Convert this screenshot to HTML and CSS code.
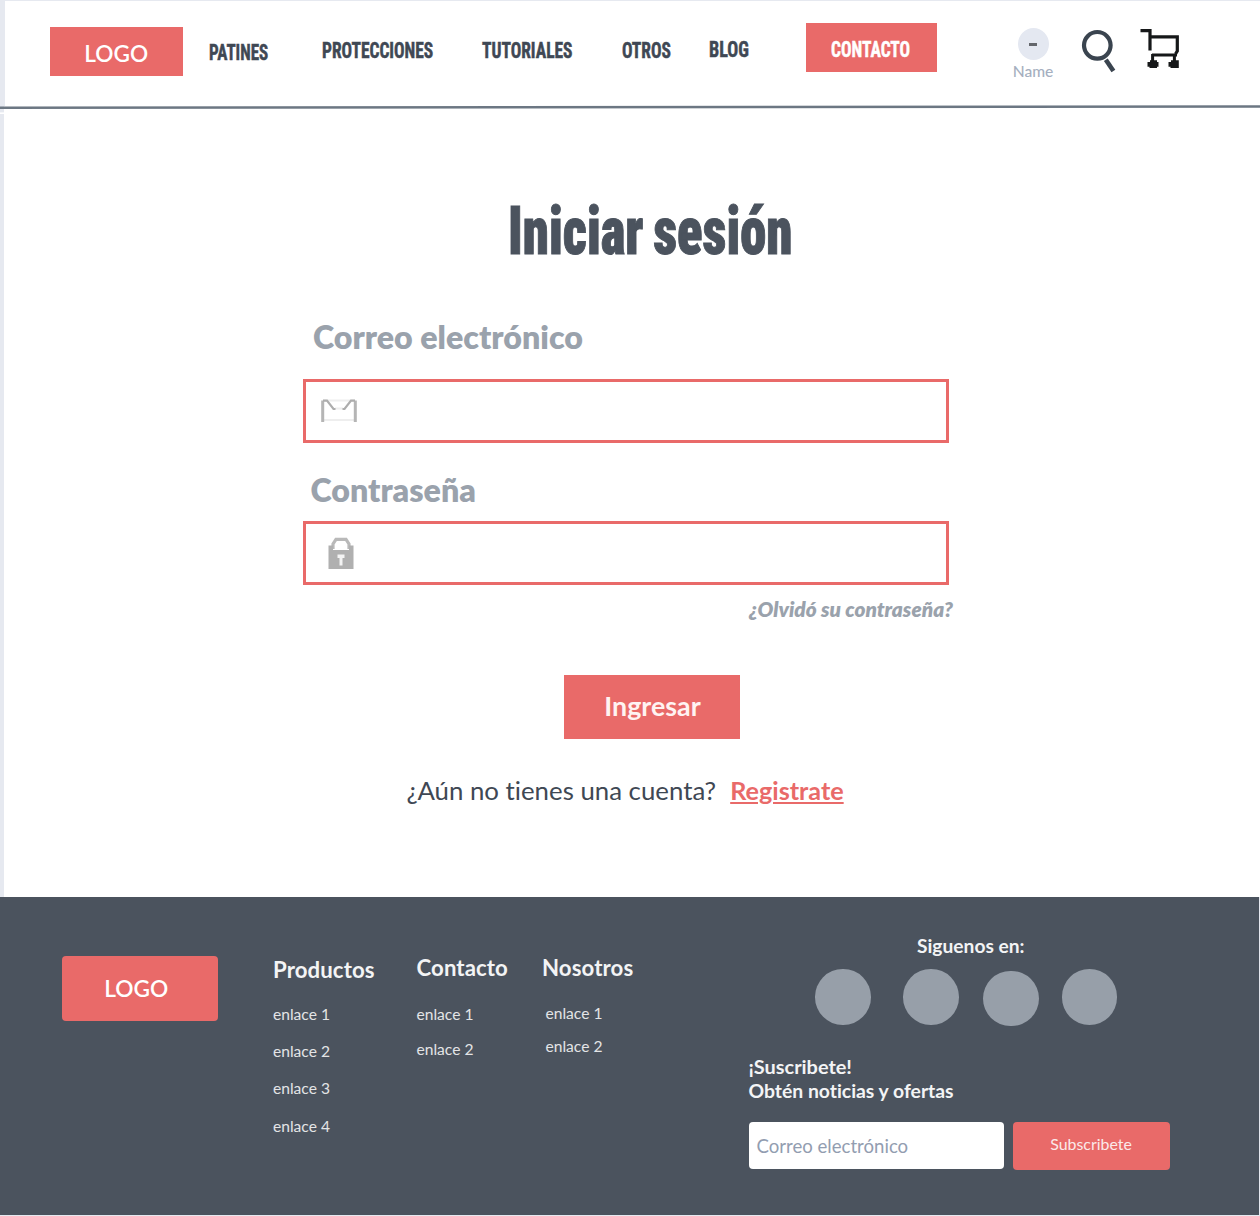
FILE: index.html
```html
<!DOCTYPE html>
<html lang="es">
<head>
<meta charset="utf-8">
<title>Iniciar sesión</title>
<link rel="stylesheet" href="styles.css">
</head>
<body>
<div class="page">
  <header class="header">
    <a class="logo">LOGO</a>
    <a class="nav-link patines"><span>PATINES</span></a>
    <a class="nav-link"><span>PROTECCIONES</span></a>
    <a class="nav-link"><span>TUTORIALES</span></a>
    <a class="nav-link"><span>OTROS</span></a>
    <a class="nav-link blog"><span>BLOG</span></a>
    <a class="nav-link contact"><span>CONTACTO</span></a>
    <div class="user">
      <div class="avatar"><i></i></div>
      <div class="user-name">Name</div>
    </div>
    <svg class="search" width="40" height="46" viewBox="0 0 40 46" fill="none" stroke="#3a444f">
      <circle cx="17.3" cy="16.3" r="13.3" stroke-width="4.2"/>
      <path d="M25.8 30.8L33.4 42" stroke-width="4.6"/>
    </svg>
    <svg class="cart" width="42" height="42" viewBox="0 0 42 42" fill="none" stroke="#161819">
      <path d="M.5 2.7H10V22.5" stroke-width="3.2"/>
      <path d="M9 8.8H37.3V23L35.5 26" stroke-width="3.2"/>
      <path d="M12 27H37M12.6 26V34M34.4 26V34" stroke-width="3"/>
      <path d="M10 32.3H17V34H18.5V38.8H17V40H9.5V38.8H7.5V34H10ZM31 32.3H38.8V40H30.5V38.8H28.5V34H31Z" fill="#161819" stroke="none"/>
    </svg>
  </header>
  <svg class="rule" width="1260" height="8" viewBox="0 0 1260 8"><path d="M0 7.2H5" stroke="#fff" stroke-width="1.6"/><path d="M0 1.8L1260 .5" stroke="#6c7783" stroke-width="2.6"/></svg>

  <main class="main">
    <h1 class="title"><span>Iniciar sesión</span></h1>
    <form class="form">
      <label class="label">Correo electrónico</label>
      <div class="field">
        <svg class="mail" width="36" height="24" viewBox="0 0 36 24" fill="none">
          <path d="M2 1.5H34M2 21H34M14 9.5H22" stroke="#eeeeee" stroke-width="2"/>
          <path d="M1.7 23V1.5M34.3 23V1.5" stroke="#b5b5b5" stroke-width="3"/>
          <path d="M2 1.6H6L12.5 10H14.5M34 1.6H30L23.5 10H21.5" stroke="#adadad" stroke-width="2.2"/>
        </svg>
      </div>
      <label class="label password">Contraseña</label>
      <div class="field">
        <svg class="lock" width="26" height="33" viewBox="0 0 26 33">
          <path d="M5 12V7L8 2.3H18L21 7V12" fill="none" stroke="#b9b9b9" stroke-width="3.2"/>
          <path d="M.5 8.5H5V13H21V8.5H25.5V32H.5Z" fill="#b0b0b0"/>
          <path d="M9.5 17.5H16.5V21H14.5V28.5H11.5V21H9.5Z" fill="#f4f4f4"/>
        </svg>
      </div>
      <a class="forgot">¿Olvidó su contraseña?</a>
      <button class="submit" type="button">Ingresar</button>
      <p class="signup">¿Aún no tienes una cuenta?<a>Registrate</a></p>
    </form>
  </main>

  <footer class="footer">
    <a class="footer-logo">LOGO</a>
    <section class="links products">
      <h2>Productos</h2>
      <a>enlace 1</a><a>enlace 2</a><a>enlace 3</a><a>enlace 4</a>
    </section>
    <section class="links contacts">
      <h2>Contacto</h2>
      <a>enlace 1</a><a>enlace 2</a>
    </section>
    <section class="links about">
      <h2>Nosotros</h2>
      <a>enlace 1</a><a>enlace 2</a>
    </section>
    <section class="social">
      <h3>Siguenos en:</h3>
      <div class="circles"><i></i><i></i><i></i><i></i></div>
      <p class="subscribe-title">¡Suscribete!</p>
      <p class="subscribe-text">Obtén noticias y ofertas</p>
      <div class="subscribe">
        <div class="email">Correo electrónico</div>
        <button type="button">Subscribete</button>
      </div>
    </section>
  </footer>
</div>
</body>
</html>
```
FILE: styles.css
```css
* { box-sizing: border-box; margin: 0; padding: 0; }
html { background: #fff; }
body {
  font-family: Lato, "Liberation Sans", sans-serif;
  font-variant-ligatures: none;
  color: #3f4854;
}
button { border: 0; font-family: inherit; }

.page {
  width: 1260px;
  height: 1216px;
  display: flex;
  flex-direction: column;
  background: #e6e9f0;
  overflow: hidden;
}

/* Header */
.header {
  flex: none;
  height: 105px;
  margin-top: 1px;
  margin-left: 4.5px;
  padding-left: 45.5px;
  display: grid;
  grid-template-columns: 158.5px 113px 160.5px 139.5px 87.5px 96.5px 201.5px 73px 60px 42px;
  align-items: start;
  background: #fff;
}
.logo {
  width: 132.5px;
  height: 49px;
  margin-top: 26px;
  padding-top: 3px;
  background: #e96a69;
  color: #fff;
  font-size: 22.6px;
  font-weight: 600;
  line-height: 47px;
  text-align: center;
}
.nav-link {
  margin-top: 37px;
  font: 700 22.5px/24px "Roboto Condensed", Roboto, sans-serif;
  color: #3f4854;
  white-space: nowrap;
}
.nav-link span {
  display: inline-block;
  transform: scaleX(.776);
  transform-origin: 0 50%;
  -webkit-text-stroke: .5px currentColor;
}
.patines { margin-top: 39px; }
.patines span { transform: scaleX(.757); }
.blog { margin-top: 36.3px; }
.blog span { transform: scaleX(.81); }
.contact {
  width: 131px;
  height: 48.5px;
  margin-top: 22px;
  padding: 14.3px 0 0 25.5px;
  background: #e96a69;
  color: #fff;
}
.user {
  width: 52px;
  margin-top: 27px;
  display: flex;
  flex-direction: column;
  align-items: center;
}
.avatar {
  width: 31px;
  height: 32px;
  display: flex;
  align-items: center;
  justify-content: center;
  border-radius: 50%;
  background: #e4e8f1;
}
.avatar i { width: 8px; height: 2.5px; margin-top: 1px; background: #63666b; }
.user-name {
  margin-top: .5px;
  font-size: 15.6px;
  font-weight: 500;
  line-height: 20px;
  color: #a5afc0;
}
.search { margin-top: 28px; }
.cart { margin-top: 27px; }
.rule {
  display: block;
  flex: none;
  overflow: visible;
  background: linear-gradient(90deg, #e6e9f0 4.5px, #fff 4.5px);
}

/* Login form */
.main {
  flex: none;
  height: 782.5px;
  border-left: 4.5px solid #e6e9f0;
  background: #fff;
}
.title {
  height: 80px;
  padding-left: 504px;
  margin-top: 77.2px;
  font: 900 66.5px/80px Roboto, "Roboto Condensed", sans-serif;
  font-stretch: 75%;
  color: #4b535e;
  white-space: nowrap;
}
.title span {
  display: inline-block;
  transform: scaleX(.793);
  transform-origin: 0 50%;
  word-spacing: -3px;
  -webkit-text-stroke: 1px currentColor;
}
.form {
  width: 646px;
  margin: 44.8px 0 0 298.5px;
  display: flex;
  flex-direction: column;
}
.label {
  padding-left: 10.5px;
  font-size: 32.2px;
  font-weight: 800;
  line-height: 42px;
  color: #9aa2ac;
}
.field {
  height: 64px;
  margin-top: 21px;
  border: 3.5px solid #e96a69;
  background: #fff;
}
.mail { display: block; margin: 17.5px 0 0 15.5px; }
.password { margin-top: 26.5px; padding-left: 8px; }
.password + .field { margin-top: 9.5px; }
.lock { display: block; margin: 13px 0 0 22px; }
.forgot {
  align-self: flex-end;
  margin: 11px -4.5px 0 0;
  font-size: 20.8px;
  font-style: italic;
  font-weight: 800;
  line-height: 25px;
  color: #9aa2ac;
}
.submit {
  width: 176px;
  height: 64.5px;
  margin: 54px 0 0 261.5px;
  padding: 0 0 3px 1px;
  background: #e96a69;
  color: #fff3f2;
  font-size: 26.8px;
  font-weight: 700;
}
.signup {
  margin: 34.5px 0 0 104px;
  font-size: 25.8px;
  line-height: 32px;
  white-space: nowrap;
}
.signup a {
  margin-left: 14px;
  font-size: 25.2px;
  font-weight: 700;
  color: #e96a69;
  text-decoration: underline;
  text-decoration-thickness: 2px;
  text-underline-offset: 2px;
}

/* Footer */
.footer {
  flex: none;
  height: 318.5px;
  margin-right: 1px;
  padding-left: 62px;
  display: grid;
  grid-template-columns: 211px 143.5px 129px 203px 421px;
  align-items: start;
  background: #4b535e;
  color: #f3f4f5;
}
.footer-logo {
  width: 155.5px;
  height: 64.5px;
  margin-top: 59.5px;
  padding: 1px 7px 0 0;
  border-radius: 4px;
  background: #e96a69;
  color: #fff;
  font-size: 22.7px;
  font-weight: 600;
  line-height: 64.5px;
  text-align: center;
}
.links { display: flex; flex-direction: column; font-size: 15.6px; line-height: 20px; color: #e3e4e6; }
.links h2 { font-size: 22.2px; font-weight: 700; line-height: 28px; letter-spacing: .1px; color: #f3f4f5; }
.products { margin-top: 59px; gap: 17.1px; }
.products h2 { margin-bottom: 3.7px; }
.contacts { margin-top: 57px; gap: 15px; }
.contacts h2 { margin-bottom: 7px; }
.about { margin-top: 57px; gap: 13px; }
.about h2 { margin: 0 0 8px -3.5px; }
.social h3 {
  margin: 39.5px 0 0 168.5px;
  font-size: 19.2px;
  font-weight: 700;
  line-height: 20px;
}
.circles { display: flex; margin: 13px 0 0 66.5px; }
.circles i { width: 55.5px; height: 55.5px; border-radius: 50%; background: #979fa9; }
.circles i:nth-child(2) { margin-left: 32.5px; }
.circles i:nth-child(3) { margin: 1.5px 0 -1.5px 24.5px; }
.circles i:nth-child(4) { margin-left: 23px; }
.subscribe-title { margin-top: 29.5px; font-size: 19.9px; font-weight: 700; line-height: 24px; }
.subscribe-text { margin-top: 1px; font-size: 19.35px; font-weight: 700; line-height: 24px; }
.subscribe { display: flex; align-items: flex-start; gap: 8.5px; margin-top: 18.5px; }
.email {
  width: 255.5px;
  height: 47.5px;
  padding: 1px 0 0 8px;
  border-radius: 4px;
  background: #fff;
  color: #929db0;
  font-size: 18.6px;
  line-height: 47.5px;
}
.subscribe button {
  width: 157px;
  height: 47.5px;
  margin-top: .5px;
  padding-bottom: 5px;
  border-radius: 4px;
  background: #e96a69;
  color: #fbe9e9;
  font-size: 15.9px;
}
```
